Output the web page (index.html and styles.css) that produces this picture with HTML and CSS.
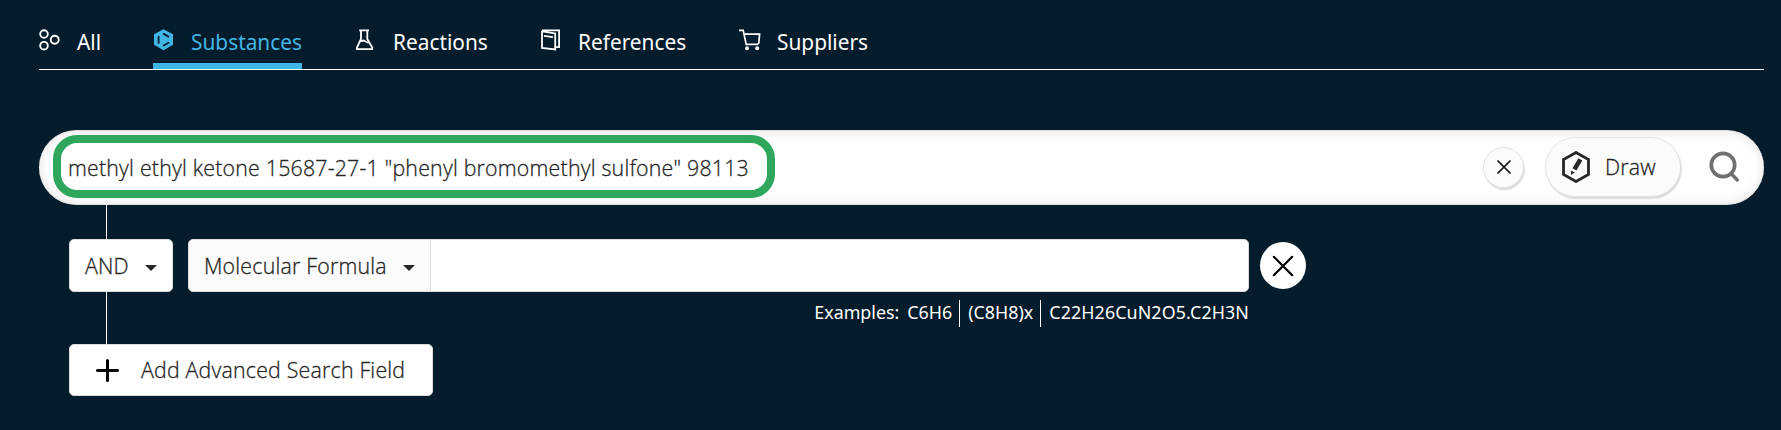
FILE: index.html
```html
<!DOCTYPE html>
<html lang="en">
<head>
<meta charset="utf-8">
<title>Substance search</title>
<link rel="stylesheet" href="styles.css">
</head>
<body>
<main class="page">
  <nav class="tabs">
    <a class="tab tab-all">
      <svg class="tab-icon" width="22" height="22" viewBox="0 0 22 22" fill="none" stroke="currentColor" stroke-width="1.9"><circle cx="5" cy="5" r="3.8"/><circle cx="5" cy="16.7" r="3.8"/><circle cx="15.7" cy="10.8" r="4"/></svg>
      <span class="tab-label">All</span>
    </a>
    <a class="tab tab-substances tab-active">
      <svg class="tab-icon" width="22" height="22" viewBox="0 0 22 22"><path fill="currentColor" d="M10.5 .2 20 5.2V15.8L10.5 21.2 1 15.8V5.2Z"/><path fill="none" stroke="#051c2c" stroke-width="1.8" stroke-linecap="round" stroke-linejoin="round" d="M5.6 7.7v6.2M10.7 4.9 15.5 7.6M15.6 13.7 10.7 16.6"/></svg>
      <span class="tab-label">Substances</span>
    </a>
    <a class="tab tab-reactions">
      <svg class="tab-icon" width="22" height="22" viewBox="0 0 22 22" fill="none" stroke="currentColor" stroke-width="1.8"><path d="M5.2 1.3H15M7 1.3V10L3 18.5V20.2H18.2V18.5L13.3 10V1.3"/><path d="M6 12.3 9.5 11.5 14.7 14"/></svg>
      <span class="tab-label">Reactions</span>
    </a>
    <a class="tab tab-references">
      <svg class="tab-icon" width="22" height="22" viewBox="0 0 22 22" fill="none" stroke="currentColor" stroke-width="1.8"><path d="M2 1.4H19.1V18.2H16M2 1.8V18.9L15.2 20.4V4.4L2 2.4"/><path d="M4 6.8 13 8.2"/></svg>
      <span class="tab-label">References</span>
    </a>
    <a class="tab tab-suppliers">
      <svg class="tab-icon" width="22" height="22" viewBox="0 0 22 22" fill="none" stroke="currentColor" stroke-width="1.7"><path d="M0 1.4H4.2L7.2 15.4H18.8M5.3 5.2H20.6L19.8 14 18.8 15.2"/><circle cx="8" cy="19.2" r="2" fill="currentColor" stroke="none"/><circle cx="18.2" cy="19.2" r="2" fill="currentColor" stroke="none"/></svg>
      <span class="tab-label">Suppliers</span>
    </a>
  </nav>

  <section class="search-bar">
    <div class="query"><span class="query-text">methyl ethyl ketone 15687-27-1 "phenyl bromomethyl sulfone" 98113</span></div>
    <div class="actions">
      <button class="clear" aria-label="Clear"><svg width="14" height="14" viewBox="0 0 14 14"><path d="M1 1 13 13M13 1 1 13" stroke="#111" stroke-width="1.7" stroke-linecap="round"/></svg></button>
      <button class="draw">
        <svg width="28" height="32" viewBox="0 0 28 32"><path d="M14 1.5 26.5 8.6V23.4L14 30.5 1.5 23.4V8.6Z" fill="none" stroke="#262626" stroke-width="2.8"/><path d="M16.4 7.2 20.3 9.4 14.4 19.5 10.5 17.3Z" fill="#262626"/><path d="M9.2 19.5 12.8 21.5 9 24Z" fill="#262626"/></svg>
        <span class="draw-label">Draw</span>
      </button>
      <button class="go" aria-label="Search"><svg width="31" height="32" viewBox="0 0 31 32" fill="none" stroke="#6f6f6f"><circle cx="14" cy="14" r="11.7" stroke-width="3.7"/><path d="M22 22.5 28.3 29" stroke-width="3.4" stroke-linecap="round"/></svg></button>
    </div>
  </section>

  <section class="advanced">
    <div class="field-row">
      <button class="operator"><span class="operator-label">AND</span><i class="caret"></i></button>
      <div class="field">
        <button class="field-type"><span class="type-label">Molecular Formula</span><i class="caret"></i></button>
        <div class="field-input"></div>
      </div>
      <button class="remove" aria-label="Remove"><svg width="22" height="22" viewBox="0 0 22 22"><path d="M1.8 1.8 20.2 20.2M20.2 1.8 1.8 20.2" stroke="#000" stroke-width="2.2" stroke-linecap="round"/></svg></button>
    </div>
    <div class="examples">
      <span class="examples-title">Examples:</span>
      <span class="example ex-first">C6H6</span>
      <span class="example ex-second">(C8H8)x</span>
      <span class="example ex-third">C22H26CuN2O5.C2H3N</span>
    </div>
    <button class="add"><svg width="23" height="23" viewBox="0 0 23 23"><path d="M11.5 1.5V21.5M1.5 11.5H21.5" stroke="#000" stroke-width="3" stroke-linecap="round"/></svg><span class="add-label">Add Advanced Search Field</span></button>
  </section>
</main>
</body>
</html>
```
FILE: styles.css
```css
* { box-sizing: border-box; }
body { margin: 0; background: #051c2c; font-family: "Open Sans", "Noto Sans", sans-serif; font-size: 21.33px; color: #262626; }
button { font: inherit; color: inherit; border: 0; padding: 0; margin: 0; background: #fff; display: flex; align-items: center; }
svg { display: block; flex: none; }
.page { width: 1781px; height: 430px; padding: 0 17px 0 39px; overflow: hidden; }

.tabs { display: flex; height: 70px; border-bottom: 1px solid #fff; color: #fff; font-family: "Noto Sans", sans-serif; font-size: 20.85px; }
.tab { display: flex; height: 69px; padding-top: 28px; white-space: nowrap; }
.tab-icon { margin-top: 1px; }
.tab-label { line-height: 28px; }
.tab-all { width: 114px; gap: 16px; }
.tab-substances { width: 149px; gap: 16px; margin-right: 52px; }
.tab-reactions { width: 186px; gap: 17px; }
.tab-references { width: 199px; gap: 16px; }
.tab-suppliers { gap: 16px; }
.tab-active { color: #41b6e6; border-bottom: 6px solid #41b6e6; }

.search-bar { display: flex; justify-content: space-between; width: 1725px; height: 75px; margin-top: 60px; padding: 4px 24px 0 14px; border-radius: 38px; background: #fff; border: 1px solid #e0e0e0; border-width: 1px 0; box-shadow: inset 0 0 12px rgba(0,0,0,.12); }
.query { width: 722px; height: 63px; border: 8px solid #2ea65c; border-radius: 24px; background: #fff; padding-left: 7px; line-height: 49px; white-space: nowrap; }
.actions { display: flex; align-items: center; height: 64px; }
.clear { width: 41px; height: 41px; justify-content: center; border-radius: 50%; background: #fbfbfb; border: 1px solid #e2e2e2; box-shadow: 1px 2px 1px #dcdcdc; margin-right: 21px; }
.draw { width: 136px; height: 60px; padding-left: 16px; gap: 15px; border-radius: 30px; background: #fbfbfb; border: 1px solid #e2e2e2; box-shadow: 1px 2px 1px #dcdcdc; margin-right: 28px; }
.go { background: none; }

.advanced { width: 1300px; height: 190px; padding: 34px 0 0 30px; background: linear-gradient(#fff, #fff) 67px 0 / 1px 140px no-repeat; }
.field-row { display: flex; align-items: center; height: 53px; }
.operator { width: 104px; height: 53px; padding: 0 15px; justify-content: space-between; border-radius: 5px; border: 1px solid #ddd; }
.field { display: flex; width: 1061px; height: 53px; margin-left: 15px; border: 1px solid #ddd; border-radius: 5px; background: #fff; overflow: hidden; }
.field-type { width: 242px; padding: 0 15px; justify-content: space-between; background: #fbfbfb; border-right: 1px solid #ddd; }
.caret { width: 12px; height: 6px; background: #262626; clip-path: polygon(0 0, 100% 0, 50% 100%); margin-top: 5px; }
.remove { width: 46px; height: 47px; margin-left: 11px; justify-content: center; border-radius: 50%; flex: none; }
.operator-label, .type-label, .draw-label, .add-label { line-height: 28px; white-space: nowrap; }
.query-text, .operator-label, .type-label, .draw-label, .add-label { font-weight: 300; letter-spacing: .21px; -webkit-text-stroke: .3px currentColor; }

.examples { display: flex; justify-content: flex-end; width: 1180px; height: 27px; margin-top: 8px; color: #fff; font: 17.85px/25px "Noto Sans", sans-serif; white-space: nowrap; }
.examples-title { margin-right: 8px; }
.ex-second, .ex-third { margin-left: 7px; padding-left: 8px; border-left: 1px solid #fff; }
.ex-third { letter-spacing: .1px; }
.add { width: 364px; height: 52px; margin-top: 17px; padding-left: 26px; gap: 22px; border-radius: 5px; border: 1px solid #ddd; }
```
